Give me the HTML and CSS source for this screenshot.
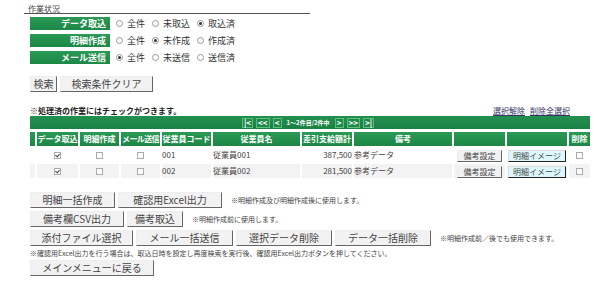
FILE: index.html
```html
<!DOCTYPE html>
<html lang="ja">
<head>
<meta charset="utf-8">
<link rel="stylesheet" href="styles.css">
</head>
<body>
<div class="page">
  <div class="section-title">作業状況</div>
  <div class="filters">
    <div class="filter-row">
      <div class="flabel">データ取込</div>
      <span class="opt"><span class="radio"></span>全件</span>
      <span class="opt"><span class="radio"></span>未取込</span>
      <span class="opt"><span class="radio on"></span>取込済</span>
    </div>
    <div class="filter-row">
      <div class="flabel">明細作成</div>
      <span class="opt"><span class="radio"></span>全件</span>
      <span class="opt"><span class="radio on"></span>未作成</span>
      <span class="opt"><span class="radio"></span>作成済</span>
    </div>
    <div class="filter-row">
      <div class="flabel">メール送信</div>
      <span class="opt"><span class="radio on"></span>全件</span>
      <span class="opt"><span class="radio"></span>未送信</span>
      <span class="opt"><span class="radio"></span>送信済</span>
    </div>
  </div>
  <div class="btn-row search-row">
    <button class="btn w-search">検索</button>
    <button class="btn w-clear">検索条件クリア</button>
  </div>
  <div class="notice-row">
    <span class="notice">※処理済の作業にはチェックがつきます。</span>
    <span class="links"><a>選択解除</a><a>削除全選択</a></span>
  </div>
  <div class="pager">
    <span class="pbtn">|&lt;</span>
    <span class="pbtn">&lt;&lt;</span>
    <span class="pbtn">&lt;</span>
    <span class="ptext">1～2件目/2件中</span>
    <span class="pbtn">&gt;</span>
    <span class="pbtn">&gt;&gt;</span>
    <span class="pbtn">&gt;|</span>
  </div>
  <table class="grid">
    <colgroup>
      <col class="c0"><col class="c1"><col class="c2"><col class="c3"><col class="c4"><col class="c5"><col class="c6"><col class="c7"><col class="c8"><col class="c9"><col class="c10">
    </colgroup>
    <thead>
      <tr>
        <th></th><th>データ取込</th><th>明細作成</th><th class="tight">メール送信</th><th>従業員コード</th><th>従業員名</th><th>差引支給額計</th><th>備考</th><th></th><th></th><th>削除</th>
      </tr>
    </thead>
    <tbody>
      <tr>
        <td></td>
        <td class="ctr"><span class="cb on"></span></td>
        <td class="ctr"><span class="cb"></span></td>
        <td class="ctr"><span class="cb"></span></td>
        <td>001</td>
        <td>従業員001</td>
        <td class="num">387,500</td>
        <td>参考データ</td>
        <td class="ctr"><button class="btn sm w-biko">備考設定</button></td>
        <td class="ctr"><button class="btn sm cyan w-img">明細イメージ</button></td>
        <td class="ctr"><span class="cb"></span></td>
      </tr>
      <tr class="alt">
        <td></td>
        <td class="ctr"><span class="cb on"></span></td>
        <td class="ctr"><span class="cb"></span></td>
        <td class="ctr"><span class="cb"></span></td>
        <td>002</td>
        <td>従業員002</td>
        <td class="num">281,500</td>
        <td>参考データ</td>
        <td class="ctr"><button class="btn sm w-biko">備考設定</button></td>
        <td class="ctr"><button class="btn sm cyan w-img">明細イメージ</button></td>
        <td class="ctr"><span class="cb"></span></td>
      </tr>
    </tbody>
  </table>
  <div class="actions">
    <div class="btn-row">
      <button class="btn w-a1">明細一括作成</button>
      <button class="btn w-a2">確認用Excel出力</button>
      <span class="note">※明細作成及び明細作成後に使用します。</span>
    </div>
    <div class="btn-row">
      <button class="btn w-b1">備考欄CSV出力</button>
      <button class="btn w-b2">備考取込</button>
      <span class="note">※明細作成前に使用します。</span>
    </div>
    <div class="btn-row">
      <button class="btn w-c1">添付ファイル選択</button>
      <button class="btn w-c2">メール一括送信</button>
      <button class="btn w-c3">選択データ削除</button>
      <button class="btn w-c4">データ一括削除</button>
      <span class="note">※明細作成前／後でも使用できます。</span>
    </div>
    <div class="note long">※確認用Excel出力を行う場合は、取込日時を設定し再度検索を実行後、確認用Excel出力ボタンを押してください。</div>
    <div class="btn-row">
      <button class="btn w-menu">メインメニューに戻る</button>
    </div>
  </div>
</div>
</body>
</html>
```

FILE: styles.css
```css
* { box-sizing: border-box; }
body {
  margin: 0;
  background: #fff;
  font-family: "Noto Sans CJK JP", "Noto Sans", sans-serif;
  font-size: 9px;
  color: #333;
}
.page {
  padding: 4px 0 0 30px;
  width: 615px;
}
.section-title {
  margin-left: -6px;
  width: 286px;
  padding-left: 4px;
  border-bottom: 1px solid #555;
  font-size: 8px;
  line-height: 9px;
  height: 10px;
  color: #444;
}
.filters {
  margin-top: 3px;
  display: flex;
  flex-direction: column;
  gap: 4px;
}
.filter-row {
  display: flex;
  align-items: center;
  height: 13px;
}
.flabel {
  width: 80px;
  height: 13px;
  background: linear-gradient(#2a9a55, #1c8745);
  color: #fff;
  font-weight: bold;
  font-size: 9px;
  line-height: 13px;
  text-align: right;
  padding-right: 4px;
  margin-right: 6px;
}
.opt {
  display: inline-flex;
  align-items: center;
  margin-right: 7px;
  font-size: 9px;
  color: #333;
}
.radio {
  width: 7px;
  height: 7px;
  border-radius: 50%;
  border: 1px solid #999;
  margin-right: 4px;
  position: relative;
  background: #fff;
}
.radio.on::after {
  content: "";
  position: absolute;
  left: 1px;
  top: 1px;
  width: 3px;
  height: 3px;
  border-radius: 50%;
  background: #333;
}
.btn-row {
  display: flex;
  align-items: center;
  gap: 3px;
}
.search-row { margin-top: 12px; }
.btn {
  height: 16px;
  padding: 0;
  font-family: inherit;
  font-size: 10px;
  line-height: 14px;
  color: #444;
  background: #f2f2f2;
  border: 1px solid;
  border-color: #eee #666 #666 #eee;
}
.w-search { width: 27px; }
.w-clear { width: 93px; }
.notice-row {
  margin-top: 14px;
  display: flex;
  justify-content: space-between;
  width: 560px;
  align-items: flex-end;
  height: 9px;
}
.notice {
  font-size: 8px;
  font-weight: bold;
  line-height: 9px;
  color: #222;
}
.links {
  display: flex;
  gap: 5px;
  margin-right: 20px;
  font-size: 8px;
  line-height: 9px;
}
.links a {
  color: #336;
  text-decoration: underline;
}
.pager {
  margin-top: 1px;
  width: 560px;
  height: 13px;
  background: linear-gradient(#229050, #1a8043);
  display: flex;
  align-items: center;
  padding-left: 212px;
  gap: 3px;
  color: #fff;
}
.pbtn {
  height: 10px;
  min-width: 9px;
  padding: 0 1px;
  border: 1px solid #5cbf80;
  font-size: 8px;
  line-height: 8px;
  font-weight: bold;
  text-align: center;
  color: #fff;
  background: #1f8a49;
}
.ptext {
  font-size: 6px;
  font-weight: bold;
  margin: 0 2px;
}
.grid {
  border-collapse: separate;
  border-spacing: 2px 2px;
  margin-left: -2px;
  margin-top: 1px;
  width: 564px;
  table-layout: fixed;
}
.c0 { width: 5px; }
.c1 { width: 41px; }
.c2 { width: 39px; }
.c3 { width: 39px; }
.c4 { width: 49px; }
.c5 { width: 87px; }
.c6 { width: 50px; }
.c7 { width: 98px; }
.c8 { width: 51px; }
.c9 { width: 60px; }
.c10 { width: 21px; }
.grid th {
  background: linear-gradient(#2a9a55, #1c8745);
  color: #fff;
  font-size: 8px;
  font-weight: bold;
  height: 14px;
  line-height: 14px;
  padding: 0;
  white-space: nowrap;
  overflow: hidden;
}
.grid th.tight { letter-spacing: -0.6px; }
.grid td {
  height: 14px;
  padding: 0;
  font-size: 8px;
  line-height: 14px;
  white-space: nowrap;
  color: #444;
}
.grid tr.alt td { background: #f3f3f3; }
.ctr { text-align: center; }
.num { text-align: right; }
.cb {
  display: inline-block;
  width: 7px;
  height: 7px;
  border: 1px solid #aaa;
  background: #fff;
  vertical-align: middle;
  position: relative;
}
.cb.on::after {
  content: "";
  position: absolute;
  left: 1px;
  top: 0;
  width: 2px;
  height: 3px;
  border: solid #444;
  border-width: 0 1px 1px 0;
  transform: rotate(40deg);
}
.btn.sm {
  height: 12px;
  font-size: 8px;
  line-height: 10px;
  vertical-align: middle;
}
.w-biko { width: 45px; }
.w-img { width: 58px; }
.btn.cyan {
  background: #dcf8fc;
  border-color: #ddd #222 #222 #ddd;
}
.actions {
  margin-top: 12px;
  display: flex;
  flex-direction: column;
  gap: 3px;
}
.note {
  font-size: 7px;
  color: #444;
  margin-left: 6px;
}
.note.long { margin: 0; line-height: 8px; }
.w-a1 { width: 85px; }
.w-a2 { width: 104px; }
.w-b1 { width: 94px; }
.w-b2 { width: 56px; }
.w-c1 { width: 103px; }
.w-c2 { width: 97px; }
.w-c3 { width: 96px; }
.w-c4 { width: 96px; }
.w-menu { width: 124px; }
```
